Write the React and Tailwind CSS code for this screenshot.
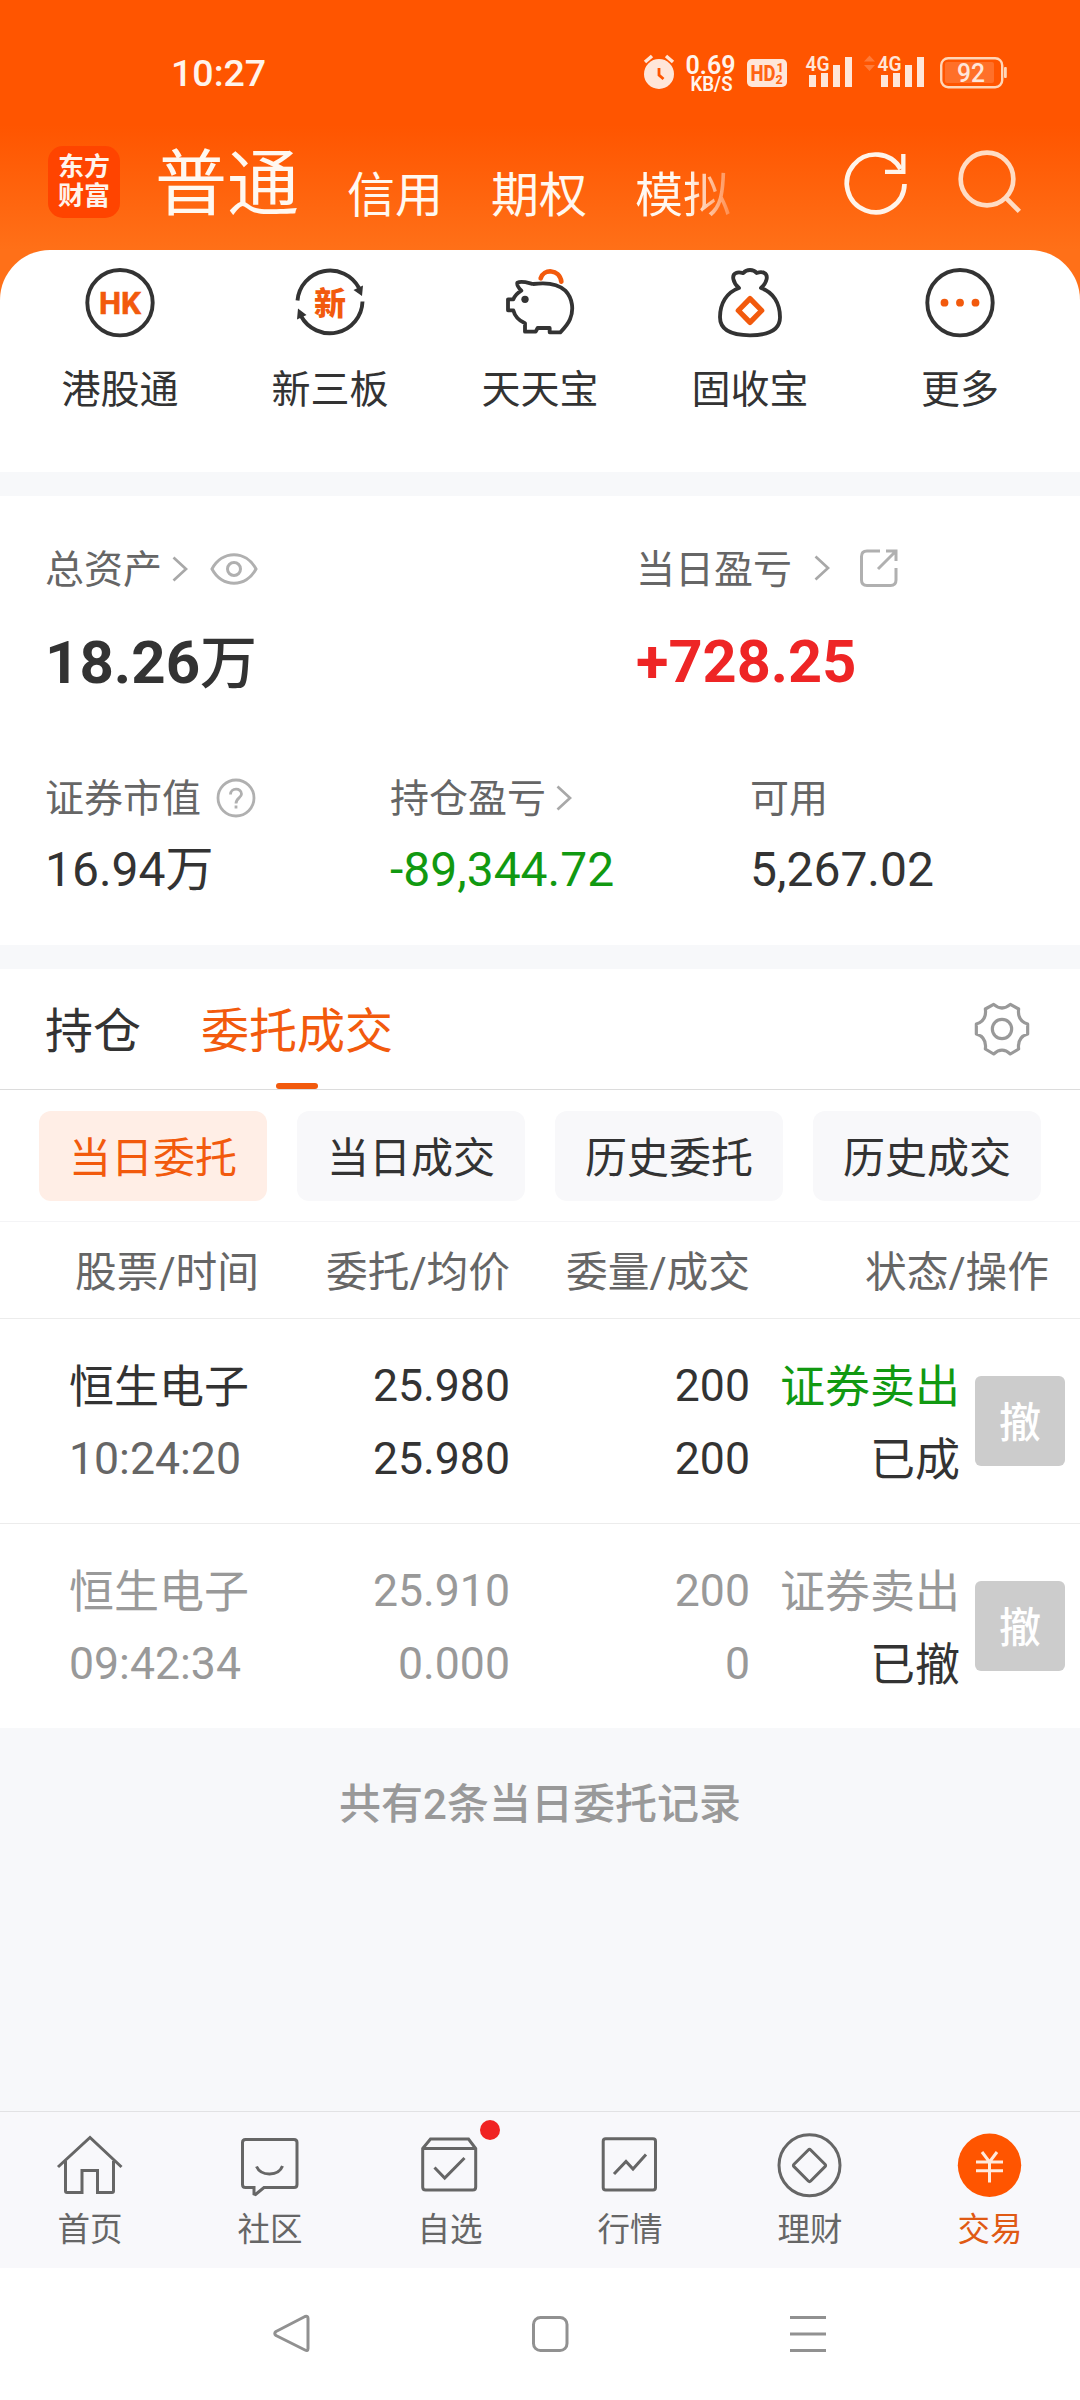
import React from "react";

function StatusBar() {
  return (
    <div className="flex h-[125px] items-center pt-[20px] pl-[171px] pr-[72px]">
      <span className="text-[37.500px] leading-[44px] font-medium text-[#fff4ec]">10:27</span>
      <svg className="ml-auto mt-[-2px]" width="368" height="64" viewBox="640 40 368 64" fill="#ffe6d9">
        <circle cx="659" cy="74" r="15" />
        <path d="M645 62l7-6M673 62l-7-6" stroke="#ffe6d9" strokeWidth="3.500" />
        <path d="M659 68v7l4.500 4" stroke="#ff5500" strokeWidth="2.800" fill="none" />
        <text x="685.500" y="74" fontSize="26" fontWeight="600" fill="#fff4ec" textLength="50" lengthAdjust="spacingAndGlyphs">0.69</text>
        <text x="690.500" y="91" fontSize="19.500" fontWeight="600" fill="#fff4ec" textLength="42" lengthAdjust="spacingAndGlyphs">KB/S</text>
        <rect x="747" y="59" width="40" height="28" rx="5" />
        <g fill="#ff6414" fontWeight="800">
          <text x="750.500" y="81" fontSize="22" textLength="25" lengthAdjust="spacingAndGlyphs">HD</text>
          <text x="776.500" y="71.500" fontSize="12.500">1</text>
          <text x="775.500" y="83.500" fontSize="12.500">2</text>
        </g>
        {[0, 72].map((dx) => (
          <g key={dx} transform={`translate(${dx} 0)`}>
            <text x="805.500" y="70.500" fontSize="21" fontWeight="600" textLength="24" lengthAdjust="spacingAndGlyphs">4G</text>
            <path d="M809 75h7v12h-7zM821 73h7v14h-7zM833 65h7v22h-7zM845 57h7v30h-7z" />
          </g>
        ))}
        <path d="M864 61.500l5.500-6 5.500 6zM864 65l5.500 6 5.500-6z" fill="#ff7a38" />
        <rect x="941.200" y="58.200" width="61" height="29" rx="7" fill="none" stroke="#ffd6b8" strokeWidth="2.400" />
        <rect x="945" y="62" width="49" height="21" rx="2" fill="#ff7029" />
        <rect x="1004" y="67" width="2.800" height="11" rx="1" fill="#ffd6b8" />
        <text x="957" y="81.500" fontSize="25" fontWeight="500" textLength="28" lengthAdjust="spacingAndGlyphs">92</text>
      </svg>
    </div>
  );
}

function Header() {
  return (
    <div className="flex h-[125px] items-start pl-[48px]">
      <div className="mt-[21px] flex h-[72px] w-[72px] flex-col items-center justify-center rounded-[15px] bg-[#ff4400] text-[26px] leading-[29px] font-bold text-[#fff4ec]">
        <span>东方</span>
        <span>财富</span>
      </div>
      <div className="ml-[35px] flex h-[98px] items-end gap-[48px] text-[48px] text-[#fff8f0]">
        <span className="text-[72px] leading-[76px]">普通</span>
        <span className="leading-[54px]">信用</span>
        <span className="leading-[54px]">期权</span>
        <span className="bg-gradient-to-r from-[#fff8f0] from-55% to-[#ff8a48] bg-clip-text leading-[54px] text-transparent">模拟</span>
      </div>
      <svg className="ml-auto mr-[40px] mt-[15px]" width="210" height="85" viewBox="0 0 630 255" fill="none" strokeWidth="14">
        <path d="M212 87A86.500 86.500 0 1 0 223.500 132" stroke="#fff4ea" />
        <path d="M220 42V95.500H165" stroke="#fff4ea" strokeWidth="13" />
        <g stroke="#ffdcc4">
          <circle cx="471" cy="117" r="79" />
          <path d="M527 173l41 41" />
        </g>
      </svg>
    </div>
  );
}

const quickIcons = {
  hk: (
    <svg width="80" height="80" viewBox="0 0 80 80">
      <circle cx="40" cy="39.700" r="32.700" fill="none" stroke="#333" strokeWidth="3.900" />
      <text x="40" y="51" textAnchor="middle" fontSize="31" fontWeight="700" fill="#f25a0d" stroke="#f25a0d" strokeWidth="0.600" textLength="42" lengthAdjust="spacingAndGlyphs">HK</text>
    </svg>
  ),
  neeq: (
    <svg width="80" height="80" viewBox="0 0 80 80">
      <g fill="none" stroke="#333" strokeWidth="3.900">
        <path d="M7.500 37.500A32.700 32.700 0 0 1 69 25" />
        <path d="M72.500 38.500A32.700 32.700 0 0 1 11 53" />
      </g>
      <path d="M73 22.500L72 33L63.500 27zM7 56.500L8 45.500L16.500 52z" fill="#333" />
      <text x="40" y="51.500" textAnchor="middle" fontSize="32" fontWeight="900" fill="#f25a0d">新</text>
    </svg>
  ),
  piggy: (
    <svg width="80" height="80" viewBox="30 9 240 240" fill="none" strokeWidth="11.500" strokeLinejoin="round" strokeLinecap="round">
      <path d="M152 55C160 26 208 26 214 65" stroke="#f25a0d" strokeWidth="14" />
      <path d="M82 68C95 62 112 68 130 72C175 66 205 72 226 92C248 115 252 150 240 178C233 195 222 206 211 217H179V204H143L137 215H105V190C88 182 74 168 70 151H54V118H70C74 108 84 98 94 92C86 84 80 76 82 68Z" stroke="#333" />
      <circle cx="105" cy="118" r="11" fill="#333" />
    </svg>
  ),
  bag: (
    <svg width="80" height="80" viewBox="660 9 240 240" fill="none" strokeWidth="11.500" strokeLinejoin="round" strokeLinecap="round">
      <path d="M747 84C728 68 724 44 738 39C746 35 754 38 760 39C770 27 790 27 800 39C806 37 816 35 823 39C836 46 831 68 813 84C850 97 870 130 870 172C870 210 838 226 780 226C722 226 690 210 690 172C690 130 710 97 747 84Z" stroke="#333" />
      <path d="M780 116L815 151.500L780 187L745 151.500Z" stroke="#f25a0d" strokeWidth="16" />
    </svg>
  ),
  more: (
    <svg width="80" height="80" viewBox="0 0 80 80">
      <circle cx="40" cy="39.700" r="32.700" fill="none" stroke="#333" strokeWidth="3.900" />
      <g fill="#f25a0d">
        <circle cx="24.500" cy="39.700" r="3.900" />
        <circle cx="40" cy="39.700" r="3.900" />
        <circle cx="55.500" cy="39.700" r="3.900" />
      </g>
    </svg>
  ),
};

const quickLinks = [
  ["hk", "港股通"],
  ["neeq", "新三板"],
  ["piggy", "天天宝"],
  ["bag", "固收宝"],
  ["more", "更多"],
];

function QuickLinks() {
  return (
    <div className="grid h-[222px] grid-cols-5 rounded-t-[50px] bg-white px-[15px] pt-[13px]">
      {quickLinks.map(([icon, label]) => (
        <div key={icon} className="flex flex-col items-center">
          {quickIcons[icon]}
          <span className="mt-[23px] text-[39px] leading-[48px] text-[#333]">{label}</span>
        </div>
      ))}
    </div>
  );
}

function Chevron({ className }) {
  return (
    <svg className={className} width="16" height="26" viewBox="0 0 16 26" fill="none" stroke="#a8a8a8" strokeWidth="2.700">
      <path d="M1.500 1.500L14 13L1.500 24.500" />
    </svg>
  );
}

function Assets() {
  return (
    <div className="flex h-[449px] flex-col bg-white pl-[45px] text-[#333]">
      <div className="flex pt-[49px]">
        <div className="w-[591px]">
          <div className="flex h-[50px] items-center text-[39px] leading-[50px] text-[#666]">
            总资产
            <Chevron className="ml-[10px] mt-[-3px]" />
            <svg className="ml-[22px] mt-[-3px]" width="48" height="34" viewBox="0 0 48 34" fill="none" stroke="#b0b0b0" strokeWidth="3">
              <path d="M2 17C12-2 36-2 46 17C36 36 12 36 2 17Z" />
              <circle cx="24" cy="17" r="6.500" />
            </svg>
          </div>
          <div className="mt-[28px] text-[60px] leading-[80px] font-bold">
            18.26<span className="text-[57px] font-medium">万</span>
          </div>
        </div>
        <div>
          <div className="flex h-[50px] items-center text-[39px] leading-[50px] text-[#666]">
            当日盈亏
            <Chevron className="ml-[22px] mt-[-4px]" />
            <svg className="ml-[29px] mt-[-5px]" width="40" height="40" viewBox="0 0 40 40" fill="none" stroke="#b0b0b0" strokeWidth="3">
              <path d="M21 3H8Q2.500 3 2.500 8.500V32Q2.500 37.500 8 37.500H31.500Q37 37.500 37 32V20" />
              <path d="M27 3H37V13M37 3L19 21" />
            </svg>
          </div>
          <div className="mt-[27px] text-[59.500px] leading-[80px] font-bold text-[#ee2525]">+728.25</div>
        </div>
      </div>
      <div className="mt-[70px] grid grid-cols-[345px_360px_1fr] text-[39px] leading-[50px] text-[#666]">
        <div className="flex items-center">
          证券市值
          <svg className="ml-[15px] mt-[-3px]" width="40" height="40" viewBox="0 0 40 40" fill="none" stroke="#b0b0b0" strokeWidth="2.800">
            <circle cx="20" cy="20" r="18" />
            <path d="M14.500 16.500C14.500 9.500 25.500 9.500 25.500 16C25.500 20 20 20 20 25.500" />
            <path d="M20 27.500v3" />
          </svg>
        </div>
        <div className="flex items-center">
          持仓盈亏
          <Chevron className="ml-[10px] mt-[-3px]" />
        </div>
        <div>可用</div>
      </div>
      <div className="mt-[18px] grid grid-cols-[345px_360px_1fr] text-[48px] leading-[56px]">
        <div>16.94万</div>
        <div className="text-[#119911]">-89,344.72</div>
        <div>5,267.02</div>
      </div>
    </div>
  );
}

function Tabs() {
  return (
    <div className="flex h-[121px] border-b border-[#dcdcdc] bg-white pl-[45px] text-[48px] leading-[60px] text-[#333]">
      <span className="pt-[33px]">持仓</span>
      <div className="ml-[60px] flex flex-col items-center text-[#f25a0d]">
        <span className="pt-[33px]">委托成交</span>
        <span className="mt-auto h-[6px] w-[42px] rounded-[3px] bg-[#f25a0d]" />
      </div>
      <svg className="ml-auto mr-[20px] mt-[11px]" width="110" height="100" viewBox="0 0 330 300" fill="none" stroke="#999" strokeWidth="9.500" strokeLinejoin="round">
        <path d="M131 73Q156 95 181 73L206 87Q201 122 233 132V162Q201 172 206 207L181 222Q156 199 131 222L106 207Q111 172 79 162V132Q111 122 106 87Z" />
        <circle cx="156" cy="147" r="29" />
      </svg>
    </div>
  );
}

function Pills() {
  return (
    <div className="flex h-[132px] gap-[30px] border-b border-[#f4f4f6] bg-white px-[39px] pt-[21px]">
      {["当日委托", "当日成交", "历史委托", "历史成交"].map((t, i) => (
        <div
          key={t}
          className={
            "flex h-[90px] w-[228px] items-center justify-center rounded-[12px] pt-[5px] text-[42px] leading-[50px] " +
            (i === 0 ? "bg-[#ffeee6] text-[#f25a0d]" : "bg-[#f8f8fa] text-[#333]")
          }
        >
          {t}
        </div>
      ))}
    </div>
  );
}

const orders = [
  { time: "10:24:20", price: "25.980", avg: "25.980", qty: "200", done: "200", state: "已成", cancelled: false },
  { time: "09:42:34", price: "25.910", avg: "0.000", qty: "200", done: "0", state: "已撤", cancelled: true },
];

function Orders() {
  return (
    <div className="bg-white">
      <div className="grid h-[97px] grid-cols-[259px_251px_240px_299px] items-center border-b border-[#ececec] pt-[5px] text-right text-[41.700px] leading-[50px] text-[#666]">
        <span>股票/时间</span>
        <span>委托/均价</span>
        <span>委量/成交</span>
        <span>状态/操作</span>
      </div>
      {orders.map((o, i) => (
        <div
          key={o.time}
          className={
            "grid grid-cols-[190px_251px_240px_210px_15px_90px] pl-[69px] pt-[31px] text-right text-[44.600px] leading-[73px] " +
            (i === 0 ? "h-[205px] border-b border-[#ececec] " : "h-[204px] ") +
            (o.cancelled ? "text-[#999]" : "text-[#333]")
          }
        >
          <div className="text-left">
            <div className="pt-[2px] text-[45px] leading-[71px]">恒生电子</div>
            <div className={o.cancelled ? "text-[#999]" : "text-[#666]"}>{o.time}</div>
          </div>
          <div>
            <div>{o.price}</div>
            <div>{o.avg}</div>
          </div>
          <div>
            <div>{o.qty}</div>
            <div>{o.done}</div>
          </div>
          <div className="pt-[1px] text-[45px]">
            <div className={o.cancelled ? "text-[#999]" : "text-[#119911]"}>证券卖出</div>
            <div className="text-[#333]">{o.state}</div>
          </div>
          <span />
          <div className="mt-[26px] flex h-[90px] items-center justify-center rounded-[6px] bg-[#ccc] pt-[5px] text-[42px] font-medium text-white">撤</div>
        </div>
      ))}
    </div>
  );
}

const navIcons = {
  home: (
    <>
      <path d="M8 37L40 7.500L71.500 37" />
      <path d="M15.500 31V61Q15.500 62.500 17 62.500H32V40.500H47.500V62.500H62Q63.500 62.500 63.500 61V31" />
    </>
  ),
  community: (
    <>
      <path d="M15.500 9.500H64Q67 9.500 67 12.500V54.500Q67 57.500 64 57.500H34L25.500 64.500L24 64V57.500H15.500Q12.500 57.500 12.500 54.500V12.500Q12.500 9.500 15.500 9.500Z" />
      <path d="M26.500 36.500C31 46.500 48.500 46.500 52.500 36" />
    </>
  ),
  picks: (
    <>
      <path d="M12.700 18.500L20.500 9H58.500L65.700 18.500V57Q65.700 60 62.700 60H15.700Q12.700 60 12.700 57ZM12.700 18.500H65.700" />
      <path d="M24.500 37.500L34.700 48L54.500 28" />
    </>
  ),
  market: (
    <>
      <rect x="13.200" y="8.800" width="52.300" height="51.200" rx="2.500" />
      <path d="M24 44L36 31.500L43 39L56 24.500" />
    </>
  ),
  wealth: (
    <>
      <circle cx="39.500" cy="35.300" r="30.500" />
      <path d="M38.300 20Q39.500 18.800 40.700 20L55 34.200Q56.200 35.400 55 36.600L40.700 51Q39.500 52.200 38.300 51L24 36.600Q22.800 35.400 24 34.200Z" />
    </>
  ),
  trade: (
    <>
      <circle cx="39.500" cy="35.300" r="31.700" fill="#ff5500" stroke="none" />
      <path d="M32 22L39.500 32L47 22M26 32H53M26 40.800H53M39.500 32V52.500" stroke="#ffe9dc" />
    </>
  ),
};

const navItems = [
  ["home", "首页"],
  ["community", "社区"],
  ["picks", "自选"],
  ["market", "行情"],
  ["wealth", "理财"],
  ["trade", "交易"],
];

function BottomNav() {
  return (
    <div className="grid h-[157px] grid-cols-6 border-t border-[#e2e2e4] bg-[#f8f8fb] pt-[18px]">
      {navItems.map(([icon, label]) => (
        <div key={icon} className="relative flex flex-col items-center">
          <svg width="80" height="70" viewBox="0 0 80 70" fill="none" stroke="#666" strokeWidth="3">
            {navIcons[icon]}
          </svg>
          {icon === "picks" && <span className="absolute top-[-10px] left-[120px] h-[20px] w-[20px] rounded-full bg-[#f02323]" />}
          <span className={"mt-[10px] text-[32.500px] leading-[40px] " + (icon === "trade" ? "text-[#e05a14]" : "text-[#666]")}>{label}</span>
        </div>
      ))}
    </div>
  );
}

function SystemNav() {
  return (
    <div className="flex h-[132px] items-start gap-[218px] bg-white pt-[46px] pl-[271px]">
      <svg width="40" height="40" viewBox="0 0 40 40" fill="none" stroke="#919191" strokeWidth="3" strokeLinejoin="round">
        <path d="M34 2.500Q37 1.500 37 4.500V34.500Q37 37.500 34 36L5 21.500Q2.500 19.500 5 17.500Z" />
      </svg>
      <svg width="40" height="40" viewBox="0 0 40 40" fill="none" stroke="#919191" strokeWidth="3">
        <rect x="4.500" y="3.500" width="33.500" height="33" rx="7" />
      </svg>
      <svg width="40" height="40" viewBox="0 0 40 40" stroke="#919191" strokeWidth="3">
        <path d="M3 3.500H39M3 20H39M3 36.500H39" />
      </svg>
    </div>
  );
}

export default function App() {
  return (
    <div className="flex h-[2400px] w-[1080px] flex-col overflow-hidden bg-[#f7f8fa] [font-family:Roboto,'Noto_Sans_CJK_SC',sans-serif]">
      <div className="bg-[linear-gradient(to_bottom,#ff5500_0px,#ff5500_125px,#ff7018_250px,#ff7018_100%)]">
        <StatusBar />
        <Header />
        <QuickLinks />
      </div>
      <div className="mt-[24px]">
        <Assets />
      </div>
      <div className="mt-[24px]">
        <Tabs />
        <Pills />
        <Orders />
      </div>
      <div className="pt-[47px] text-center text-[42px] leading-[60px] font-medium text-[#999]">共有2条当日委托记录</div>
      <div className="mt-auto">
        <BottomNav />
        <SystemNav />
      </div>
    </div>
  );
}
